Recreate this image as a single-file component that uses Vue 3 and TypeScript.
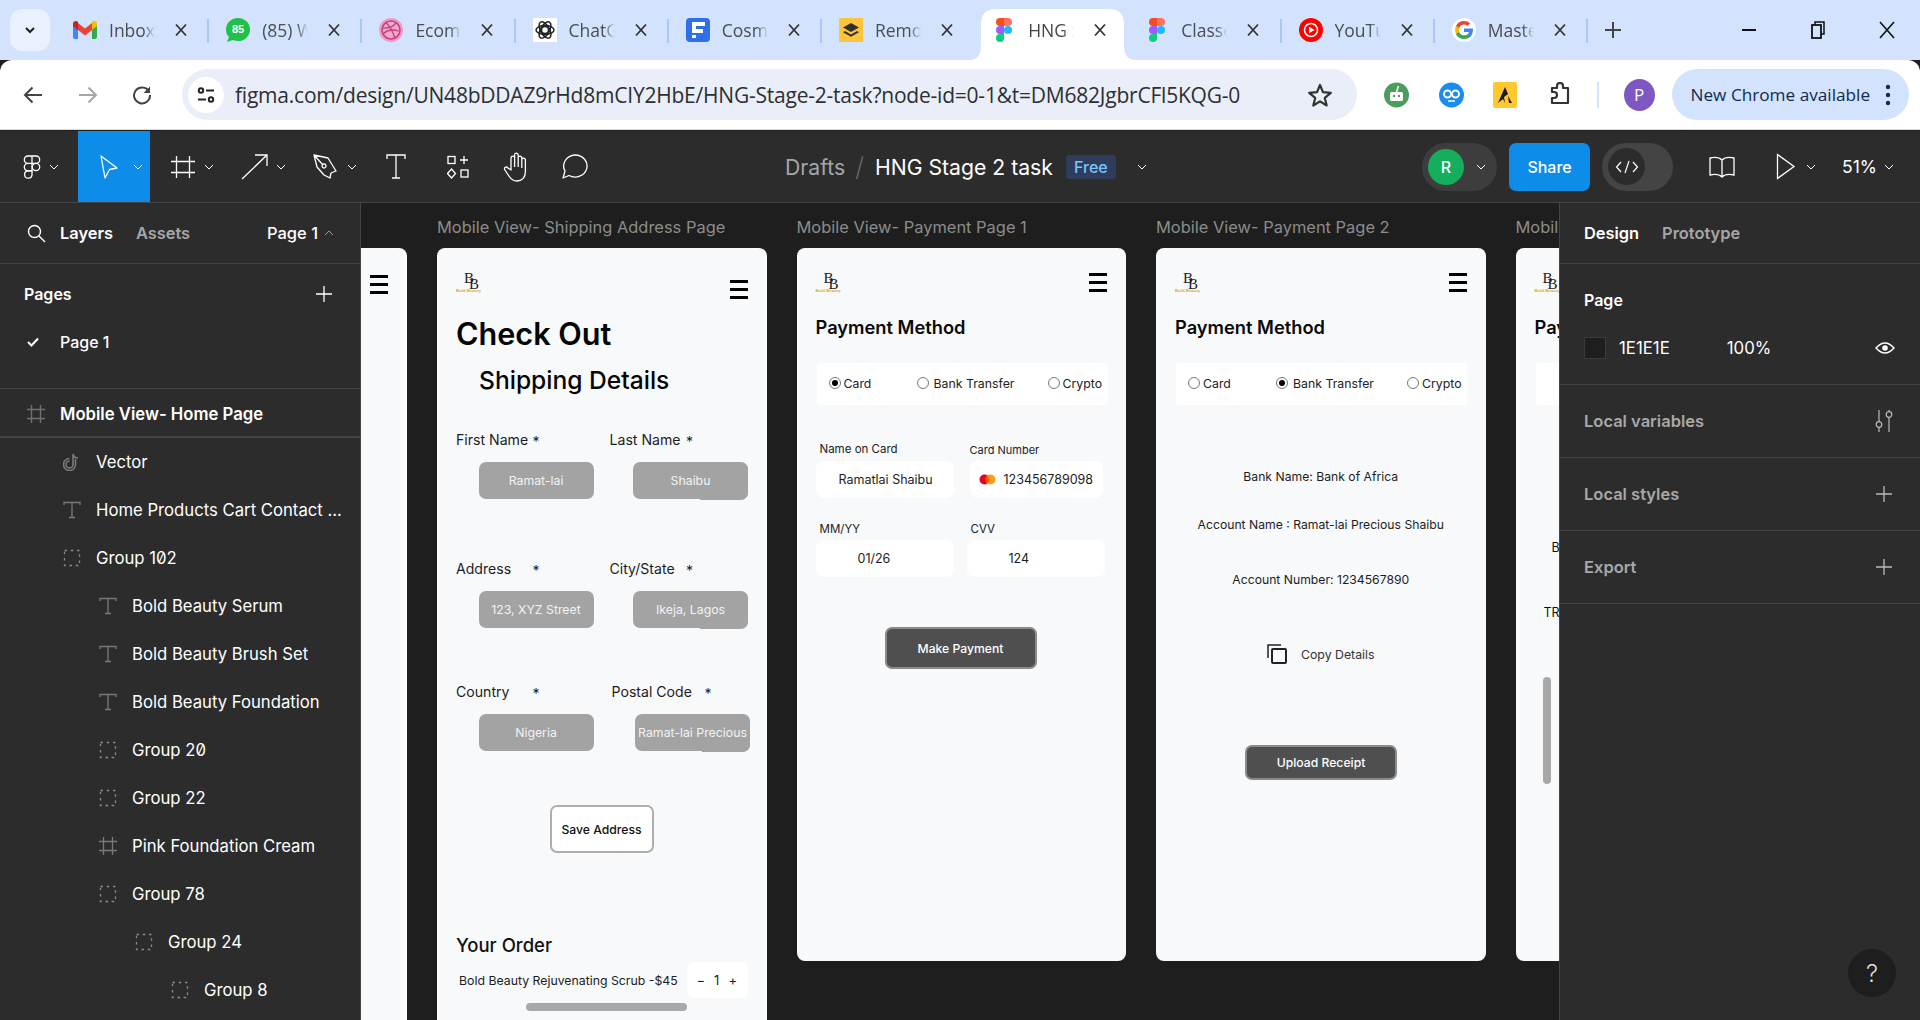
<script setup lang="ts">
interface Tab { icon: string; title: string; active?: boolean }
interface Layer { icon: string; label: string; depth: number }
interface ShipField { label: string; value: string; wide?: boolean; shift?: boolean }

const tabs: Tab[] = [
  { icon: 'gmail', title: 'Inbox' },
  { icon: 'whatsapp', title: '(85) WhatsApp' },
  { icon: 'dribbble', title: 'Ecommerce' },
  { icon: 'chatgpt', title: 'ChatGPT' },
  { icon: 'cosmos', title: 'Cosmos' },
  { icon: 'remote', title: 'Remote' },
  { icon: 'figma', title: 'HNG Stage', active: true },
  { icon: 'figma', title: 'Classes' },
  { icon: 'youtube', title: 'YouTube' },
  { icon: 'google', title: 'Master' },
]

const layers: Layer[] = [
  { icon: 'vector', label: 'Vector', depth: 0 },
  { icon: 'text', label: 'Home Products Cart Contact ...', depth: 0 },
  { icon: 'group', label: 'Group 102', depth: 0 },
  { icon: 'text', label: 'Bold Beauty Serum', depth: 1 },
  { icon: 'text', label: 'Bold Beauty Brush Set', depth: 1 },
  { icon: 'text', label: 'Bold Beauty Foundation', depth: 1 },
  { icon: 'group', label: 'Group 20', depth: 1 },
  { icon: 'group', label: 'Group 22', depth: 1 },
  { icon: 'frame', label: 'Pink Foundation Cream', depth: 1 },
  { icon: 'group', label: 'Group 78', depth: 1 },
  { icon: 'group', label: 'Group 24', depth: 2 },
  { icon: 'group', label: 'Group 8', depth: 3 },
]

const shipping: ShipField[][] = [
  [{ label: 'First Name', value: 'Ramat-lai' }, { label: 'Last Name', value: 'Shaibu' }],
  [{ label: 'Address', value: '123, XYZ Street' }, { label: 'City/State', value: 'Ikeja, Lagos' }],
  [{ label: 'Country', value: 'Nigeria' }, { label: 'Postal Code', value: 'Ramat-lai Precious', wide: true, shift: true }],
]

const methods = ['Card', 'Bank Transfer', 'Crypto']
const toolChevrons = ['tool-main', 'tool-frame', 'tool-line', 'tool-pen']
</script>

<template>
  <div class="page">
    <header class="tabstrip">
      <button class="tab-search">
        <svg width="14" height="14" viewBox="0 0 14 14"><path d="M3 5l4 4 4-4" fill="none" stroke="#1f1f1f" stroke-width="2" /></svg>
      </button>
      <div v-for="tab in tabs" :key="tab.title" class="tab" :class="{ active: tab.active }">
        <svg v-if="tab.active" class="tab-shape" width="170" height="51" viewBox="0 0 170 51">
          <path d="M0 51C10 51 12 44 12 36V15Q12 0 27 0H140Q155 0 155 15V36C155 44 157 51 167 51Z" fill="#fff" />
        </svg>
        <span class="favicon">
          <svg v-if="tab.icon === 'gmail'" width="24" height="18" viewBox="0 0 24 18">
            <path d="M0 3v13q0 2 2 2h3V8z" fill="#4285f4" /><path d="M24 3v13q0 2-2 2h-3V8z" fill="#34a853" />
            <path d="M5 9V2L12 7.500 19 2v7l-7 5.500z" fill="#ea4335" /><path d="M0 3q0-3 3-3 1 0 2 1v8L0 5z" fill="#c5221f" />
            <path d="M24 3q0-3-3-3-1 0-2 1v8l5-4z" fill="#fbbc04" />
          </svg>
          <svg v-else-if="tab.icon === 'whatsapp'" width="24" height="24" viewBox="0 0 24 24">
            <path d="M12 0a12 11.500 0 0 1 0 23q-3 0-5-1l-6 2 2-5q-3-3-3-7.500A12 11.500 0 0 1 12 0z" fill="#1fc14a" />
            <text x="12" y="15" text-anchor="middle" class="wa-count">85</text>
          </svg>
          <svg v-else-if="tab.icon === 'dribbble'" width="24" height="24" viewBox="0 0 24 24">
            <circle cx="12" cy="12" r="12" fill="#ef9bc6" /><circle cx="12" cy="12" r="9" fill="#f2a8cd" stroke="#c2417f" stroke-width="1.500" />
            <path d="M7 4.500q6 6 9 16M3 10q9 1 14-5M4 16q6-6 16-3" fill="none" stroke="#c2417f" stroke-width="1.300" />
          </svg>
          <svg v-else-if="tab.icon === 'chatgpt'" width="24" height="24" viewBox="0 0 24 24">
            <rect width="24" height="24" fill="#fff" />
            <g fill="none" stroke="#222" stroke-width="1.500">
              <circle cx="12" cy="12" r="3.500" /><ellipse cx="12" cy="12" rx="9" ry="4.500" /><ellipse cx="12" cy="12" rx="9" ry="4.500" transform="rotate(60 12 12)" /><ellipse cx="12" cy="12" rx="9" ry="4.500" transform="rotate(120 12 12)" />
            </g>
          </svg>
          <svg v-else-if="tab.icon === 'cosmos'" width="24" height="24" viewBox="0 0 24 24">
            <rect width="24" height="24" rx="4" fill="#2f6fe8" />
            <path d="M6 4h13v4H10v3h7v4h-7v0H6z" fill="#fff" /><rect x="6" y="17" width="4" height="3" fill="#fff" />
          </svg>
          <svg v-else-if="tab.icon === 'remote'" width="24" height="24" viewBox="0 0 24 24">
            <rect width="24" height="24" fill="#fdc43c" />
            <path d="M12 5l8 4.500-8 4.500-8-4.500z" fill="#33302a" /><path d="M6 13l6 3.400 6-3.400 2 1.200-8 4.600-8-4.600z" fill="#33302a" />
          </svg>
          <svg v-else-if="tab.icon === 'figma'" width="18" height="24" viewBox="0 0 18 24">
            <path d="M9 0H5a4 4 0 0 0 0 8h4z" fill="#f24e1e" /><path d="M9 0h4a4 4 0 0 1 0 8H9z" fill="#ff7262" />
            <path d="M9 8H5a4 4 0 0 0 0 8h4z" fill="#a259ff" /><circle cx="13" cy="12" r="4" fill="#1abcfe" />
            <path d="M9 16H5a4 4 0 1 0 4 4z" fill="#0acf83" />
          </svg>
          <svg v-else-if="tab.icon === 'youtube'" width="24" height="24" viewBox="0 0 24 24">
            <circle cx="12" cy="12" r="12" fill="#f00" /><circle cx="12" cy="12" r="6.500" fill="none" stroke="#fff" stroke-width="1.500" />
            <path d="M10 8.800l5.500 3.200-5.500 3.200z" fill="#fff" />
          </svg>
          <svg v-else width="24" height="24" viewBox="0 0 24 24">
            <circle cx="12" cy="12" r="12" fill="#fff" />
            <path d="M21 12.200q0-1-.2-1.700H12v3.400h5q-.3 1.800-1.800 2.800v2.300h3q2.800-2.600 2.800-6.800z" fill="#4285f4" />
            <path d="M12 21q3.800 0 6.200-2.300l-3-2.300q-1.300.9-3.200.9-3.600 0-4.800-3.400H4v2.400Q6.500 21 12 21z" fill="#34a853" />
            <path d="M7.200 13.900q-.6-1.900 0-3.800V7.700H4q-1.900 4.300 0 8.600z" fill="#fbbc04" />
            <path d="M12 6.600q2.100 0 3.500 1.300l2.600-2.600Q15.800 3 12 3 6.500 3 4 7.700l3.200 2.400Q8.400 6.600 12 6.600z" fill="#ea4335" />
          </svg>
        </span>
        <span class="tab-title">{{ tab.title }}</span>
        <svg class="tab-close" width="14" height="14" viewBox="0 0 14 14"><path d="M2 1.500l10 11M12 1.500l-10 11" stroke="#333" stroke-width="1.800" /></svg>
      </div>
      <svg class="new-tab" width="18" height="18" viewBox="0 0 18 18"><path d="M9 1v16M1 9h16" stroke="#444" stroke-width="2" /></svg>
      <div class="window-btns">
        <svg width="16" height="16" viewBox="0 0 16 16"><path d="M1 8h14" stroke="#111" stroke-width="2" /></svg>
        <svg width="16" height="18" viewBox="0 0 16 18"><path d="M5 4V1h9v12h-3" fill="none" stroke="#111" stroke-width="1.500" /><rect x="2" y="4" width="9" height="13" fill="none" stroke="#111" stroke-width="1.800" /></svg>
        <svg width="16" height="18" viewBox="0 0 16 18"><path d="M1 1l14 16M15 1L1 17" stroke="#111" stroke-width="1.600" /></svg>
      </div>
    </header>

    <div class="browserbar">
      <svg width="20" height="20" viewBox="0 0 20 20"><path d="M19 10H2M9.500 2.500L2 10l7.500 7.500" fill="none" stroke="#444" stroke-width="2" /></svg>
      <svg class="fwd" width="20" height="20" viewBox="0 0 20 20"><path d="M1 10h17M10.500 2.500L18 10l-7.500 7.500" fill="none" stroke="#a6a6a6" stroke-width="2" /></svg>
      <svg class="reload" width="20" height="20" viewBox="0 0 20 20"><path d="M17 6.500A8 8 0 1 0 18 10" fill="none" stroke="#444" stroke-width="2" /><path d="M18 1.500V8h-6.500z" fill="#444" /></svg>
      <div class="urlbar">
        <span class="site-icon">
          <svg width="20" height="20" viewBox="0 0 20 20" fill="none" stroke="#222" stroke-width="2"><circle cx="5" cy="5.500" r="2.200" /><path d="M10 5.500h8M2 14.500h8" /><circle cx="15" cy="14.500" r="2.200" /></svg>
        </span>
        <span class="url">figma.com/design/UN48bDDAZ9rHd8mCIY2HbE/HNG-Stage-2-task?node-id=0-1&amp;t=DM682JgbrCFl5KQG-0</span>
        <svg class="star" width="26" height="26" viewBox="0 0 26 26"><path d="M13 3l3 7.200 7.800.6-6 5.100 1.900 7.600L13 19.400l-6.700 4.100 1.900-7.600-6-5.100 7.800-.6z" fill="none" stroke="#333" stroke-width="2.200" stroke-linejoin="round" /></svg>
      </div>
      <div class="extensions">
        <svg width="25" height="26" viewBox="0 0 25 26"><circle cx="12.500" cy="13" r="12.500" fill="#4a9d5b" /><rect x="6" y="10" width="13" height="9" rx="1.500" fill="#fff" /><rect x="9" y="13" width="2" height="2" fill="#4a9d5b" /><rect x="14" y="13" width="2" height="2" fill="#4a9d5b" /><path d="M12.500 10l2-6" stroke="#fff" stroke-width="1.500" /></svg>
        <svg width="25" height="26" viewBox="0 0 25 26"><circle cx="12.500" cy="13" r="12.500" fill="#1a8cf0" /><circle cx="8.500" cy="12" r="3.500" fill="none" stroke="#fff" stroke-width="2" /><circle cx="16.500" cy="12" r="3.500" fill="none" stroke="#fff" stroke-width="2" /><path d="M9 19h7" stroke="#fff" stroke-width="1.500" /></svg>
        <svg width="24" height="26" viewBox="0 0 24 26"><rect width="24" height="26" rx="2" fill="#fdc92f" /><path d="M5 21L12 5l3 7-4 3 1 6-2-4z" fill="#1a1a1a" /><path d="M15 14l4 7h-3z" fill="#1a1a1a" /></svg>
        <svg width="26" height="26" viewBox="0 0 26 26"><path d="M5 6h5V4a3 3 0 0 1 6 0v2h5v15H5v-5h2a3 3 0 0 0 0-6H5z" fill="none" stroke="#333" stroke-width="2.200" stroke-linejoin="round" /></svg>
      </div>
      <span class="bar-sep"></span>
      <span class="profile">P</span>
      <div class="update-pill">
        <span>New Chrome available</span>
        <svg width="6" height="22" viewBox="0 0 6 22"><circle cx="3" cy="3" r="2.200" fill="#0f2a52" /><circle cx="3" cy="11" r="2.200" fill="#0f2a52" /><circle cx="3" cy="19" r="2.200" fill="#0f2a52" /></svg>
      </div>
    </div>

    <div class="figma-bar">
      <div class="tool tool-logo">
        <svg width="18" height="24" viewBox="0 0 18 24" fill="none" stroke="#fff" stroke-width="1.300"><path d="M9 1H5a3.700 3.700 0 0 0 0 7.400h4zM9 1h4a3.700 3.700 0 0 1 0 7.400H9zM9 8.400H5a3.700 3.700 0 0 0 0 7.400h4z" /><circle cx="13" cy="12" r="3.700" /><path d="M9 15.800H5a3.700 3.700 0 1 0 4 3.700z" /></svg>
        <svg class="chev" width="10" height="6" viewBox="0 0 10 6"><path d="M1 1l4 4 4-4" fill="none" stroke="#fff" /></svg>
      </div>
      <div class="tool tool-move">
        <svg width="20" height="24" viewBox="0 0 20 24"><path d="M2 1l16 12-7.500 1.500L6 23z" fill="none" stroke="#fff" stroke-width="1.300" stroke-linejoin="round" /></svg>
        <svg class="chev" width="10" height="6" viewBox="0 0 10 6"><path d="M1 1l4 4 4-4" fill="none" stroke="#fff" /></svg>
      </div>
      <div v-for="name in toolChevrons.slice(1)" :key="name" class="tool" :class="name">
        <svg v-if="name === 'tool-frame'" width="24" height="22" viewBox="0 0 24 22"><path d="M5.500 0v22M18.500 0v22M0 5.500h24M0 16.500h24" stroke="#fff" stroke-width="1.300" /></svg>
        <svg v-else-if="name === 'tool-line'" width="28" height="26" viewBox="0 0 28 26"><path d="M1 25L26 1M14 1h12v11" fill="none" stroke="#fff" stroke-width="1.300" /></svg>
        <svg v-else width="24" height="26" viewBox="0 0 24 26"><path d="M1 1l14 3 8 13-5 2-1 5-6-3-7-8zM1 1l9 10M11 10a2 2 0 1 0 .1 0" fill="none" stroke="#fff" stroke-width="1.300" stroke-linejoin="round" /></svg>
        <svg class="chev" width="10" height="6" viewBox="0 0 10 6"><path d="M1 1l4 4 4-4" fill="none" stroke="#fff" /></svg>
      </div>
      <svg class="tool-icon tool-text" width="20" height="25" viewBox="0 0 20 25"><path d="M1 5V1h18v4M10 1v23M6 24h8" fill="none" stroke="#fff" stroke-width="1.300" /></svg>
      <svg class="tool-icon tool-comp" width="22" height="24" viewBox="0 0 22 24" fill="none" stroke="#fff" stroke-width="1.300"><rect x="1" y="1.500" width="7" height="7" /><path d="M17 1v8M13 5h8" /><path d="M4.500 14l4 4.500-4 4.500-4-4.500z" /><rect x="14" y="15" width="7" height="7" /></svg>
      <svg class="tool-icon tool-hand" width="28" height="30" viewBox="0 0 28 30"><path d="M8 18V6a1.800 1.800 0 0 1 3.600 0V3a1.800 1.800 0 0 1 3.600 0v3a1.800 1.800 0 0 1 3.600 0v2a1.800 1.800 0 0 1 3.600 0v12c0 5-3 9-8.500 9-4 0-6-2-8-5l-4-6c-1.500-2.500 1.500-4 3-2z M11.600 6v9M15.200 6v9M18.800 8v8" fill="none" stroke="#fff" stroke-width="1.300" stroke-linejoin="round" /></svg>
      <svg class="tool-icon tool-chat" width="26" height="25" viewBox="0 0 26 25"><path d="M13 1a12 11 0 1 1-6 20.500L1 24l2-7A12 11 0 0 1 13 1z" fill="none" stroke="#fff" stroke-width="1.300" stroke-linejoin="round" /></svg>

      <div class="file-title">
        <span class="drafts">Drafts</span>
        <span class="slash">/</span>
        <span class="file-name">HNG Stage 2 task</span>
        <span class="free">Free</span>
        <svg class="chev" width="10" height="6" viewBox="0 0 10 6"><path d="M1 1l4 4 4-4" fill="none" stroke="#fff" /></svg>
      </div>

      <div class="bar-right">
        <div class="avatar-pill">
          <span class="avatar">R</span>
          <svg class="chev" width="10" height="6" viewBox="0 0 10 6"><path d="M1 1l4 4 4-4" fill="none" stroke="#fff" /></svg>
        </div>
        <button class="share">Share</button>
        <div class="dev-toggle">
          <span class="dev-knob">
            <svg width="24" height="16" viewBox="0 0 24 16" fill="none" stroke="#fff" stroke-width="1.200"><path d="M6 3L1.500 8 6 13M18 3l4.500 5-4.500 5M14 2l-4 12" /></svg>
          </span>
        </div>
        <svg class="book" width="28" height="24" viewBox="0 0 28 24"><path d="M14 5C11 2 6 2 2 3v17c4-1 9-1 12 2 3-3 8-3 12-2V3c-4-1-9-1-12 2zM14 5v17" fill="none" stroke="#fff" stroke-width="1.300" /></svg>
        <svg class="play" width="20" height="27" viewBox="0 0 20 27"><path d="M1.500 1.500L18 13.500 1.500 25.500z" fill="none" stroke="#fff" stroke-width="1.300" /></svg>
        <svg class="chev play-chev" width="10" height="6" viewBox="0 0 10 6"><path d="M1 1l4 4 4-4" fill="none" stroke="#fff" /></svg>
        <span class="zoom">51%</span>
        <svg class="chev zoom-chev" width="10" height="6" viewBox="0 0 10 6"><path d="M1 1l4 4 4-4" fill="none" stroke="#fff" /></svg>
      </div>
    </div>

    <div class="workspace">
      <aside class="left-panel">
        <div class="panel-tabs">
          <svg width="20" height="20" viewBox="0 0 20 20"><circle cx="8.500" cy="8.500" r="6" fill="none" stroke="#fff" stroke-width="1.400" /><path d="M13 13l6 6" stroke="#fff" stroke-width="1.400" /></svg>
          <span class="tab-on">Layers</span>
          <span class="tab-off">Assets</span>
          <span class="page-pick">Page 1</span>
          <svg width="10" height="6" viewBox="0 0 10 6"><path d="M1 5l4-4 4 4" fill="none" stroke="#999" /></svg>
        </div>
        <div class="pages">
          <div class="pages-head">
            <span>Pages</span>
            <svg width="18" height="18" viewBox="0 0 18 18"><path d="M9 1v16M1 9h16" stroke="#fff" stroke-width="1.300" /></svg>
          </div>
          <div class="page-row">
            <svg width="14" height="12" viewBox="0 0 14 12"><path d="M2 6l3.500 3.500L12 2.500" fill="none" stroke="#fff" stroke-width="2" /></svg>
            <span>Page 1</span>
          </div>
        </div>
        <div class="frame-row">
          <svg width="18" height="18" viewBox="0 0 18 18"><path d="M4.500 0v18M13.500 0v18M0 4.500h18M0 13.500h18" stroke="#6f6f6f" stroke-width="1.400" /></svg>
          <span>Mobile View- Home Page</span>
        </div>
        <div v-for="layer in layers" :key="layer.label" class="layer" :class="`depth-${layer.depth}`">
          <svg class="layer-icon" width="18" height="18" viewBox="0 0 18 18">
            <path v-if="layer.icon === 'text'" d="M1 4V1.500h16V4M9 1.500v15M6 16.500h6" fill="none" stroke="#7a7a7a" stroke-width="1.300" />
            <rect v-else-if="layer.icon === 'group'" x="1.500" y="1.500" width="15" height="15" fill="none" stroke="#8a8a8a" stroke-width="1.300" stroke-dasharray="2.500 3.750" />
            <path v-else-if="layer.icon === 'frame'" d="M4.500 0v18M13.500 0v18M0 4.500h18M0 13.500h18" stroke="#7a7a7a" stroke-width="1.300" />
            <path v-else d="M10 1v10.500a3.500 3.500 0 1 1-3.500-3.500M10 1c.5 2.500 2.500 4 5 4M12.500 6v5.500a6 6 0 1 1-6-6" fill="none" stroke="#7a7a7a" stroke-width="1.600" />
          </svg>
          <span>{{ layer.label }}</span>
        </div>
      </aside>

      <main class="canvas">
        <section class="col col-stub">
          <div class="frame stub">
            <div class="burger"><i></i><i></i><i></i></div>
          </div>
        </section>

        <section class="col">
          <p class="frame-label">Mobile View- Shipping Address Page</p>
          <div class="frame frame-long">
            <div class="frame-head">
              <div class="logo"><span class="logo-a">B</span><span class="logo-b">B</span><span class="logo-c">Bold Beauty</span></div>
              <div class="burger burger-low"><i></i><i></i><i></i></div>
            </div>
            <h1 class="checkout">Check Out</h1>
            <h2 class="shipping">Shipping Details</h2>
            <div class="ship-rows">
              <div v-for="(row, r) in shipping" :key="r" class="ship-row">
                <div v-for="field in row" :key="field.label" class="ship-field" :class="{ shift: field.shift }">
                  <div class="ship-label"><span :class="{ wide: field.wide }">{{ field.label }}</span><b>*</b></div>
                  <div class="ship-input">{{ field.value }}</div>
                </div>
              </div>
            </div>
            <button class="save">Save Address</button>
            <h3 class="order">Your Order</h3>
            <div class="order-row">
              <span>Bold Beauty Rejuvenating Scrub -$45</span>
              <div class="qty"><span>−</span><span>1</span><span>+</span></div>
            </div>
            <div class="h-scroll"></div>
          </div>
        </section>

        <section class="col">
          <p class="frame-label">Mobile View- Payment Page 1</p>
          <div class="frame frame-short">
            <div class="frame-head">
              <div class="logo"><span class="logo-a">B</span><span class="logo-b">B</span><span class="logo-c">Bold Beauty</span></div>
              <div class="burger"><i></i><i></i><i></i></div>
            </div>
            <h2 class="pay-title">Payment Method</h2>
            <div class="radios">
              <label v-for="(m, i) in methods" :key="m" class="radio"><i :class="{ on: i === 0 }"></i>{{ m }}</label>
            </div>
            <div class="card-form">
              <div class="card-field">
                <span class="card-label">Name on Card</span>
                <div class="card-input">Ramatlai Shaibu</div>
              </div>
              <div class="card-field">
                <span class="card-label number-label">Card Number</span>
                <div class="card-input card-number">
                  <svg width="17" height="11" viewBox="0 0 17 11"><circle cx="5.500" cy="5.500" r="5" fill="#eb001b" /><circle cx="11.500" cy="5.500" r="5" fill="#f79e1b" /><path d="M8.500 1.500a5 5 0 0 1 0 8 5 5 0 0 1 0-8z" fill="#ff5f00" /></svg>
                  123456789098
                </div>
              </div>
              <div class="card-field">
                <span class="card-label low-label">MM/YY</span>
                <div class="card-input card-short">01/26</div>
              </div>
              <div class="card-field cvv">
                <span class="card-label low-label">CVV</span>
                <div class="card-input card-short">124</div>
              </div>
            </div>
            <button class="dark-btn make">Make Payment</button>
          </div>
        </section>

        <section class="col">
          <p class="frame-label">Mobile View- Payment Page 2</p>
          <div class="frame frame-short">
            <div class="frame-head">
              <div class="logo"><span class="logo-a">B</span><span class="logo-b">B</span><span class="logo-c">Bold Beauty</span></div>
              <div class="burger"><i></i><i></i><i></i></div>
            </div>
            <h2 class="pay-title">Payment Method</h2>
            <div class="radios">
              <label v-for="(m, i) in methods" :key="m" class="radio"><i :class="{ on: i === 1 }"></i>{{ m }}</label>
            </div>
            <p class="bank bank-1">Bank Name: Bank of Africa</p>
            <p class="bank bank-2">Account Name : Ramat-lai Precious Shaibu</p>
            <p class="bank bank-3">Account Number: 1234567890</p>
            <div class="copy">
              <svg width="20" height="20" viewBox="0 0 20 20" fill="none" stroke="#222"><path d="M1 14V1h13" stroke-width="1.500" /><rect x="5" y="5" width="14" height="14" rx="1" stroke-width="2" /></svg>
              <span>Copy Details</span>
            </div>
            <button class="dark-btn upload">Upload Receipt</button>
          </div>
        </section>

        <section class="col">
          <p class="frame-label">Mobile View- Payment Page 3</p>
          <div class="frame frame-short">
            <div class="frame-head">
              <div class="logo"><span class="logo-a">B</span><span class="logo-b">B</span><span class="logo-c">Bold Beauty</span></div>
              <div class="burger"><i></i><i></i><i></i></div>
            </div>
            <h2 class="pay-title">Payment Method</h2>
            <div class="radios"></div>
            <p class="peek peek-1">Bank Name</p>
            <p class="peek peek-2">TRX ID</p>
            <div class="v-scroll"></div>
          </div>
        </section>
      </main>

      <aside class="right-panel">
        <div class="panel-tabs right-tabs">
          <span class="tab-on">Design</span>
          <span class="tab-off">Prototype</span>
        </div>
        <div class="page-section">
          <h4>Page</h4>
          <div class="fill-row">
            <i class="swatch"></i>
            <span class="hex">1E1E1E</span>
            <span class="opacity">100%</span>
            <svg width="20" height="14" viewBox="0 0 20 14"><path d="M1 7q9-10 18 0-9 10-18 0z" fill="none" stroke="#fff" stroke-width="1.400" /><circle cx="10" cy="7" r="2.800" fill="#fff" /></svg>
          </div>
        </div>
        <div class="prop-row">
          <span>Local variables</span>
          <svg width="18" height="22" viewBox="0 0 18 22" fill="none" stroke="#bbb" stroke-width="1.200"><path d="M4 0v12M4 17v5M14 0v2M14 7v15" /><circle cx="4" cy="14.500" r="2.800" /><circle cx="14" cy="4.500" r="2.800" /></svg>
        </div>
        <div class="prop-row">
          <span>Local styles</span>
          <svg width="18" height="18" viewBox="0 0 18 18"><path d="M9 1v16M1 9h16" stroke="#bbb" stroke-width="1.300" /></svg>
        </div>
        <div class="prop-row">
          <span>Export</span>
          <svg width="18" height="18" viewBox="0 0 18 18"><path d="M9 1v16M1 9h16" stroke="#bbb" stroke-width="1.300" /></svg>
        </div>
        <div class="help">?</div>
      </aside>
    </div>
  </div>
</template>

<style>
html, body { margin: 0; background: #1e1e1e; }
</style>

<style scoped>
.page { width: 1920px; height: 1020px; overflow: hidden; display: flex; flex-direction: column; font-family: Inter, "Liberation Sans", sans-serif; }
button { border: none; font-family: inherit; padding: 0; }
h1, h2, h3, h4, p { margin: 0; font-weight: inherit; }

/* chrome */
.tabstrip { height: 60px; flex: none; background: #d3e3fd; display: flex; align-items: center; position: relative; }
.tab-search { width: 40px; height: 42px; margin: 9px 6px 9px 10px; border-radius: 12px; background: #e9f0fe; display: flex; align-items: center; justify-content: center; }
.tab { width: 153.2px; height: 60px; flex: none; display: flex; align-items: center; padding: 0 0 0 17px; box-sizing: border-box; position: relative; font: 17.500px "Open Sans", Roboto, sans-serif; color: #4a4d52; }
.tab::after { content: ""; position: absolute; right: 0; top: 19px; height: 24px; width: 2px; background: #a8c7fa; }
.tab.active { color: #444; }
.tab.active::after { display: none; }
.tab:nth-child(7)::after, .tab:nth-child(8)::after { display: none; }
.tab-shape { position: absolute; left: -6px; top: 9px; }
.favicon { width: 24px; height: 24px; flex: none; display: flex; align-items: center; justify-content: center; position: relative; }
.wa-count { font: 700 11px "Liberation Sans", sans-serif; fill: #fff; }
.tab-title { width: 46px; margin-left: 12px; white-space: nowrap; overflow: hidden; position: relative; mask-image: linear-gradient(90deg, #000 75%, transparent); -webkit-mask-image: linear-gradient(90deg, #000 75%, transparent); }
.tab-close { margin-left: 19px; position: relative; flex: none; }
.new-tab { margin: 0 0 0 16px; flex: none; }
.window-btns { margin-left: auto; display: flex; align-items: center; gap: 53px; padding: 0 25px 1px 0; }

.browserbar { height: 70px; flex: none; background: #fff; border-radius: 12px 12px 0 0; margin-bottom: 1px; border-bottom: 1px solid #dcdcdc; box-sizing: border-box; display: flex; align-items: center; padding-left: 23px; }
.fwd { margin-left: 35px; }
.reload { margin-left: 34px; }
.urlbar { width: 1175px; height: 51px; margin-left: 30px; background: #e9eef8; border-radius: 26px; display: flex; align-items: center; padding-left: 6px; box-sizing: border-box; }
.site-icon { width: 36px; height: 36px; border-radius: 50%; background: #fff; display: flex; align-items: center; justify-content: center; flex: none; }
.url { margin-left: 11px; font: 21px "Open Sans", Roboto, sans-serif; letter-spacing: -0.22px; color: #2e2f33; white-space: nowrap; width: 1073px; }
.star { flex: none; margin-left: -1px; }
.extensions { display: flex; align-items: center; margin-left: 27px; gap: 29.500px; }
.bar-sep { width: 2px; height: 26px; background: #d3e3fd; margin-left: 24px; }
.profile { width: 31px; height: 32px; border-radius: 50%; background: #7e57c2; color: #fff; font: 17px "Open Sans", sans-serif; display: flex; align-items: center; justify-content: center; margin-left: 25px; }
.update-pill { width: 237px; height: 51px; margin-left: 17px; border-radius: 26px; background: #d3e3fd; display: flex; align-items: center; padding-left: 19px; box-sizing: border-box; font: 17.200px "Open Sans", sans-serif; color: #0f2a52; white-space: nowrap; gap: 15px; }

/* figma toolbar */
.figma-bar { height: 72px; flex: none; background: #2c2c2c; border-bottom: 1px solid #444; box-sizing: border-box; display: flex; align-items: center; position: relative; color: #fff; }
.tool { display: flex; align-items: center; height: 71px; flex: none; }
.chev { flex: none; }
.tool-logo { width: 78px; padding-left: 23px; box-sizing: border-box; gap: 8px; }
.tool-move { width: 72px; background: #0d8ce9; padding-left: 21px; box-sizing: border-box; gap: 14px; }
.tool-frame { margin-left: 21px; gap: 9px; }
.tool-line { margin-left: 26.500px; gap: 7px; }
.tool-pen { margin-left: 27.500px; gap: 10px; }
.tool-icon { flex: none; }
.tool-text { margin-left: 28.500px; }
.tool-comp { margin-left: 41px; }
.tool-hand { margin-left: 34px; }
.tool-chat { margin-left: 31px; }
.file-title { position: absolute; left: 785px; top: 0; height: 71px; display: flex; align-items: center; font-size: 21.200px; white-space: nowrap; }
.drafts { color: #a6a6a6; }
.slash { color: #777; margin: 0 11px 0 10px; font-weight: 200; font-size: 26px; }
.file-name { color: #fff; font-weight: 400; }
.free { margin-left: 13px; width: 50px; height: 24px; background: #2f3d5c; color: #7cc4f8; border-radius: 3px; font-size: 16px; font-weight: 500; display: flex; align-items: center; justify-content: center; }
.file-title .chev { margin-left: 21px; }
.bar-right { margin-left: auto; display: flex; align-items: center; padding-right: 26px; }
.avatar-pill { width: 75px; height: 48px; border-radius: 24px; background: #3d3d3d; display: flex; align-items: center; padding-left: 6px; box-sizing: border-box; gap: 12px; }
.avatar { width: 36px; height: 36px; border-radius: 50%; background: #14ae5c; display: flex; align-items: center; justify-content: center; font-size: 16px; font-weight: 500; }
.share { width: 81px; height: 48px; margin-left: 12px; border-radius: 7px; background: #0d8ce9; color: #fff; font-size: 16px; font-weight: 500; }
.dev-toggle { width: 71px; height: 48px; margin-left: 12px; border-radius: 24px; background: #444; display: flex; align-items: center; padding-left: 6px; box-sizing: border-box; }
.dev-knob { width: 37px; height: 37px; border-radius: 50%; background: #2c2c2c; display: flex; align-items: center; justify-content: center; }
.book { margin-left: 35px; }
.play { margin-left: 40px; }
.play-chev { margin-left: 10px; }
.zoom { margin-left: 26px; font-size: 17.500px; }
.zoom-chev { margin-left: 7px; }

.workspace { flex: 1; min-height: 0; display: flex; }

/* left panel */
.left-panel { width: 361px; flex: none; background: #2c2c2c; border-right: 1px solid #444; box-sizing: border-box; color: #fff; font-size: 16px; overflow: hidden; }
.panel-tabs { height: 61px; border-bottom: 1px solid #444; box-sizing: border-box; display: flex; align-items: center; padding-left: 26px; font-weight: 600; font-size: 16.400px; }
.tab-on { color: #fff; margin-left: 14px; }
.tab-off { color: #a6a6a6; margin-left: 23px; font-weight: 600; }
.page-pick { margin-left: auto; margin-right: 6px; font-weight: 500; font-size: 16.500px; }
.panel-tabs > svg:last-child { margin-right: 26px; }
.pages { height: 125px; border-bottom: 1px solid #444; padding: 0 24px; box-sizing: border-box; }
.pages-head { height: 60px; display: flex; align-items: center; justify-content: space-between; font-weight: 600; padding-right: 3px; }
.page-row { height: 36px; display: flex; align-items: center; font-weight: 500; gap: 20px; padding-left: 2px; }
.frame-row { height: 49px; border-bottom: 2px solid #444; display: flex; align-items: center; gap: 15px; padding: 2px 0 0 27px; font-weight: 600; font-size: 16.700px; box-sizing: border-box; }
.layer { height: 48px; display: flex; align-items: center; white-space: nowrap; font-size: 16.700px; font-feature-settings: "zero"; }
.layer-icon { margin-right: 15px; flex: none; }
.depth-0 { padding-left: 63px; }
.depth-1 { padding-left: 99px; }
.depth-2 { padding-left: 135px; }
.depth-3 { padding-left: 171px; }

/* canvas */
.canvas { flex: 1; min-width: 0; background: #1e1e1e; overflow: hidden; display: flex; gap: 30px; }
.col { width: 329.500px; flex: none; }
.col-stub { width: 46px; padding-top: 45px; }
.frame-label { height: 45px; line-height: 49px; color: #8c8c8c; font-size: 16.450px; white-space: nowrap; }
.frame { background: #f8f9fb; border-radius: 8px; box-sizing: border-box; color: #111; position: relative; overflow: hidden; padding: 24px 19px 0 19px; }
.stub { border-radius: 0 8px 0 0; width: 46px; height: 780px; padding: 26px 0 0 9px; }
.frame-long { height: 780px; }
.frame-short { height: 713px; }
.frame-head { display: flex; justify-content: space-between; align-items: flex-start; height: 45px; }
.logo { width: 24px; height: 21px; position: relative; font-family: "Liberation Serif", serif; color: #222; }
.logo-a { position: absolute; left: 8px; top: -1px; font-size: 15px; line-height: 15px; }
.logo-b { position: absolute; left: 13px; top: 5px; font-size: 15px; line-height: 15px; }
.logo-c { position: absolute; left: 0; top: 17px; font: 700 4.300px/4px "Liberation Sans", sans-serif; color: #d4ad2f; white-space: nowrap; }
.burger { width: 18px; display: flex; flex-direction: column; gap: 5px; padding-top: 1px; }
.burger-low { padding-top: 8px; }
.burger i { height: 3px; background: #000; display: block; }

.checkout { font-size: 30.600px; line-height: 36px; font-weight: 600; margin-top: -1px; color: #050505; }
.shipping { font-size: 24.600px; line-height: 32px; font-weight: 500; margin: 12px 0 0 23px; color: #050505; }
.ship-rows { margin-top: 34px; }
.ship-row { display: grid; grid-template-columns: 153.500px 1fr; margin-bottom: 54px; }
.ship-row:nth-child(1) { margin-bottom: 60px; }
.ship-field.shift { margin-left: 2px; }
.ship-label { height: 20px; line-height: 20px; font-size: 14.100px; color: #1d1d1d; display: flex; }
.ship-label span { min-width: 76.500px; }
.ship-label span.wide { min-width: 93px; }
.ship-label b { font-weight: 400; line-height: 24px; }
.ship-input { width: 115px; height: 37px; margin: 12px 0 0 22.500px; background: #a4a3a4; border-radius: 7px; color: #f2f2f2; font-size: 12.300px; display: flex; align-items: center; justify-content: center; white-space: nowrap; position: relative; isolation: isolate; }
.ship-field:nth-child(2) .ship-input { margin-left: 23.500px; }
.ship-field:nth-child(2) .ship-input::after { content: ""; position: absolute; left: 58%; right: 0; top: 1px; bottom: -1px; background: #a4a3a4; border-radius: 0 7px 7px 0; z-index: -1; }
.save { display: block; width: 104px; height: 48px; margin: 1px 0 0 93.500px; background: #fff; border: 2px solid #aeaeae; border-radius: 7px; font-size: 12.200px; font-weight: 500; color: #111; }
.order { font-size: 18.500px; line-height: 24px; font-weight: 500; margin-top: 80px; }
.order-row { display: flex; align-items: center; height: 36px; margin-top: 5px; padding-left: 3px; font-size: 12.300px; color: #1d1d1d; white-space: nowrap; }
.qty { width: 61px; height: 36px; margin-left: auto; background: #fff; border-radius: 7px; display: flex; align-items: center; gap: 9px; padding-left: 10px; box-sizing: border-box; font-size: 13px; }
.h-scroll { width: 161px; height: 8px; margin: 5px 0 0 69.500px; border-radius: 4px; background: #a8a8a8; }

.pay-title { font-size: 18.300px; line-height: 26px; font-weight: 600; margin-top: -3px; color: #0a0a0a; }
.radios { width: 291px; height: 42px; margin: 23px 0 0 1px; background: #fff; border-radius: 4px; display: grid; grid-template-columns: 88px 131px auto; align-items: center; padding: 0 0 2px 12px; box-sizing: border-box; }
.radio { display: flex; align-items: center; gap: 3px; font-size: 12.300px; color: #222; white-space: nowrap; }
.radio:nth-child(2) { gap: 5px; }
.radio i { width: 12px; height: 12px; border-radius: 50%; border: 1px solid #777; box-sizing: border-box; flex: none; background: #fff; position: relative; }
.radio i.on::after { content: ""; position: absolute; inset: 2px; border-radius: 50%; background: #000; }
.card-form { display: grid; grid-template-columns: 154px 1fr; row-gap: 22px; margin-top: 36px; }
.card-label { display: block; height: 16px; line-height: 16px; font-size: 11.500px; padding-left: 4px; color: #222; margin-bottom: 4px; }
.number-label { font-size: 11px; padding-left: 0; line-height: 18px; }
.low-label { line-height: 18px; }
.card-input { width: 138px; height: 37px; background: #fff; border-radius: 8px; font-size: 12.500px; display: flex; align-items: center; padding-left: 23px; box-sizing: border-box; color: #1d1d1d; }
.card-number { width: 133px; padding-left: 9px; gap: 8px; }
.card-short { padding-left: 42px; }
.cvv { margin-left: -3px; }
.dark-btn { display: block; width: 152px; background: #4f4f4f; border: 2px solid #8a8a8a; border-radius: 7px; color: #fff; font-size: 12.200px; font-weight: 500; }
.make { height: 42px; margin: 50px 0 0 69px; }
.bank { text-align: center; font-size: 12.200px; line-height: 16px; color: #1d1d1d; white-space: nowrap; }
.bank-1 { margin-top: 64px; }
.bank-2 { margin-top: 32px; }
.bank-3 { margin-top: 39px; }
.copy { display: flex; align-items: center; gap: 14px; height: 20px; margin: 56px 0 0 92px; font-size: 12.300px; color: #333; }
.upload { height: 35px; margin: 81px 0 0 70px; }
.peek { font-size: 12.500px; line-height: 16px; white-space: nowrap; }
.peek-1 { margin: 135px 0 0 17px; }
.peek-2 { margin: 49px 0 0 9px; }
.v-scroll { width: 8px; height: 107px; margin: 56px 0 0 8px; border-radius: 4px; background: #a8a8a8; }

/* right panel */
.right-panel { width: 361px; flex: none; background: #2c2c2c; border-left: 1px solid #444; box-sizing: border-box; color: #fff; font-size: 16px; position: relative; }
.right-tabs { padding-left: 24px; }
.right-tabs .tab-on { margin-left: 0; }
.page-section { height: 121px; border-bottom: 1px solid #444; padding: 0 24px; box-sizing: border-box; }
.page-section h4 { font-weight: 600; height: 72px; line-height: 72px; }
.fill-row { display: flex; align-items: center; height: 24px; font-size: 16.800px; }
.swatch { width: 22px; height: 22px; background: #1e1e1e; border: 1px solid #3a3a3a; box-sizing: border-box; }
.hex { margin-left: 13px; }
.opacity { margin-left: 57px; }
.fill-row svg { margin-left: auto; margin-right: 1px; }
.prop-row { height: 73px; border-bottom: 1px solid #444; display: flex; align-items: center; justify-content: space-between; padding: 0 27px 0 24px; box-sizing: border-box; color: #a8a8a8; font-weight: 600; font-size: 16.500px; }
.help { position: absolute; left: 288px; top: 746px; width: 48px; height: 48px; border-radius: 50%; background: #1e1e1e; display: flex; align-items: center; justify-content: center; font-size: 24px; color: #ddd; font-weight: 300; }
</style>
